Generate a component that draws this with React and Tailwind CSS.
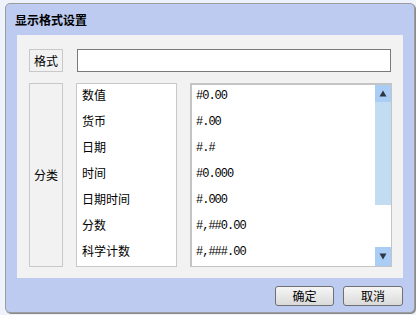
import React from 'react';

const categories = ['数值', '货币', '日期', '时间', '日期时间', '分数', '科学计数'];
const formats = ['#0.00', '#.00', '#.#', '#0.000', '#.000', '#,##0.00', '#,###.00'];

const cjk = { fontFamily: '"Noto Sans CJK SC", "Noto Sans", sans-serif' };
const mono = { fontFamily: '"Liberation Mono", "DejaVu Sans Mono", monospace' };

const FormatDialog = () => {
  return (
    <div className="w-[416px] h-[315px] bg-[#eef2fa] pt-[3px] pl-[5px]" style={cjk}>
      <div className="w-[410px] h-[310px] flex flex-col bg-[#bccbef] border border-[#9c9c9c] rounded-[5px] shadow-[1px_1px_0_#8a8a8a]">
        {/* title */}
        <div className="h-[31px] flex items-center pl-[9px] text-[12px] font-bold text-black">
          显示格式设置
        </div>

        {/* body */}
        <div className="mx-[11px] w-[386px] h-[243px] bg-[#f2f2f2] pt-[14px] pl-[12px]">
          <div className="flex h-[23px]">
            <div className="w-[34px] h-[23px] border border-[#c8c8c8] flex items-center justify-center text-[12px] text-black">
              格式
            </div>
            <input
              type="text"
              className="ml-[14px] w-[314px] h-[23px] bg-white border border-[#7a7a7a] outline-none"
            />
          </div>

          <div className="flex mt-[11px] h-[184px]">
            <div className="w-[34px] h-[184px] border border-[#c8c8c8] flex items-center justify-center text-[12px] text-black">
              分类
            </div>

            <div className="ml-[13px] w-[101px] h-[184px] bg-white border border-[#c8c8c8]">
              {categories.map((c) => (
                <div key={c} className="h-[26px] pl-[5px] pt-[3px] text-[12px] leading-[16px] text-black">
                  {c}
                </div>
              ))}
            </div>

            <div className="ml-[13px] w-[202px] h-[184px] flex bg-white border-l-2 border-t-2 border-r border-b border-[#c4c4c4]">
              <div className="flex-1">
                {formats.map((f) => (
                  <div
                    key={f}
                    className="h-[26px] pl-[4px] pt-[3px] text-[12px] leading-[16px] tracking-[-1px] text-black"
                    style={mono}
                  >
                    {f}
                  </div>
                ))}
              </div>
              <div className="w-[16px] flex flex-col">
                <div className="h-[17px] bg-[#a9cdf5] flex items-center justify-center">
                  <svg width="8" height="7" viewBox="0 0 8 7">
                    <path d="M4 0.5 L7.5 6.5 L0.5 6.5 Z" fill="#2e3540" />
                  </svg>
                </div>
                <div className="h-[103px] bg-[#c2dcf1]" />
                <div className="flex-1 bg-white" />
                <div className="h-[19px] bg-[#a9cdf5] flex items-center justify-center">
                  <svg width="8" height="7" viewBox="0 0 8 7">
                    <path d="M0.5 0.5 L7.5 0.5 L4 6.5 Z" fill="#2e3540" />
                  </svg>
                </div>
              </div>
            </div>
          </div>
        </div>

        {/* buttons */}
        <div className="flex justify-end gap-[9px] mt-[8px] mr-[11px]">
          <button className="w-[59px] h-[20px] rounded-[3px] border border-[#707070] bg-gradient-to-b from-[#f6f6f6] to-[#dadada] text-[12px] leading-[18px] text-black">
            确定
          </button>
          <button className="w-[60px] h-[20px] rounded-[3px] border border-[#707070] bg-gradient-to-b from-[#f6f6f6] to-[#dadada] text-[12px] leading-[18px] text-black">
            取消
          </button>
        </div>
      </div>
    </div>
  );
};

export default function App() {
  return <FormatDialog />;
}
